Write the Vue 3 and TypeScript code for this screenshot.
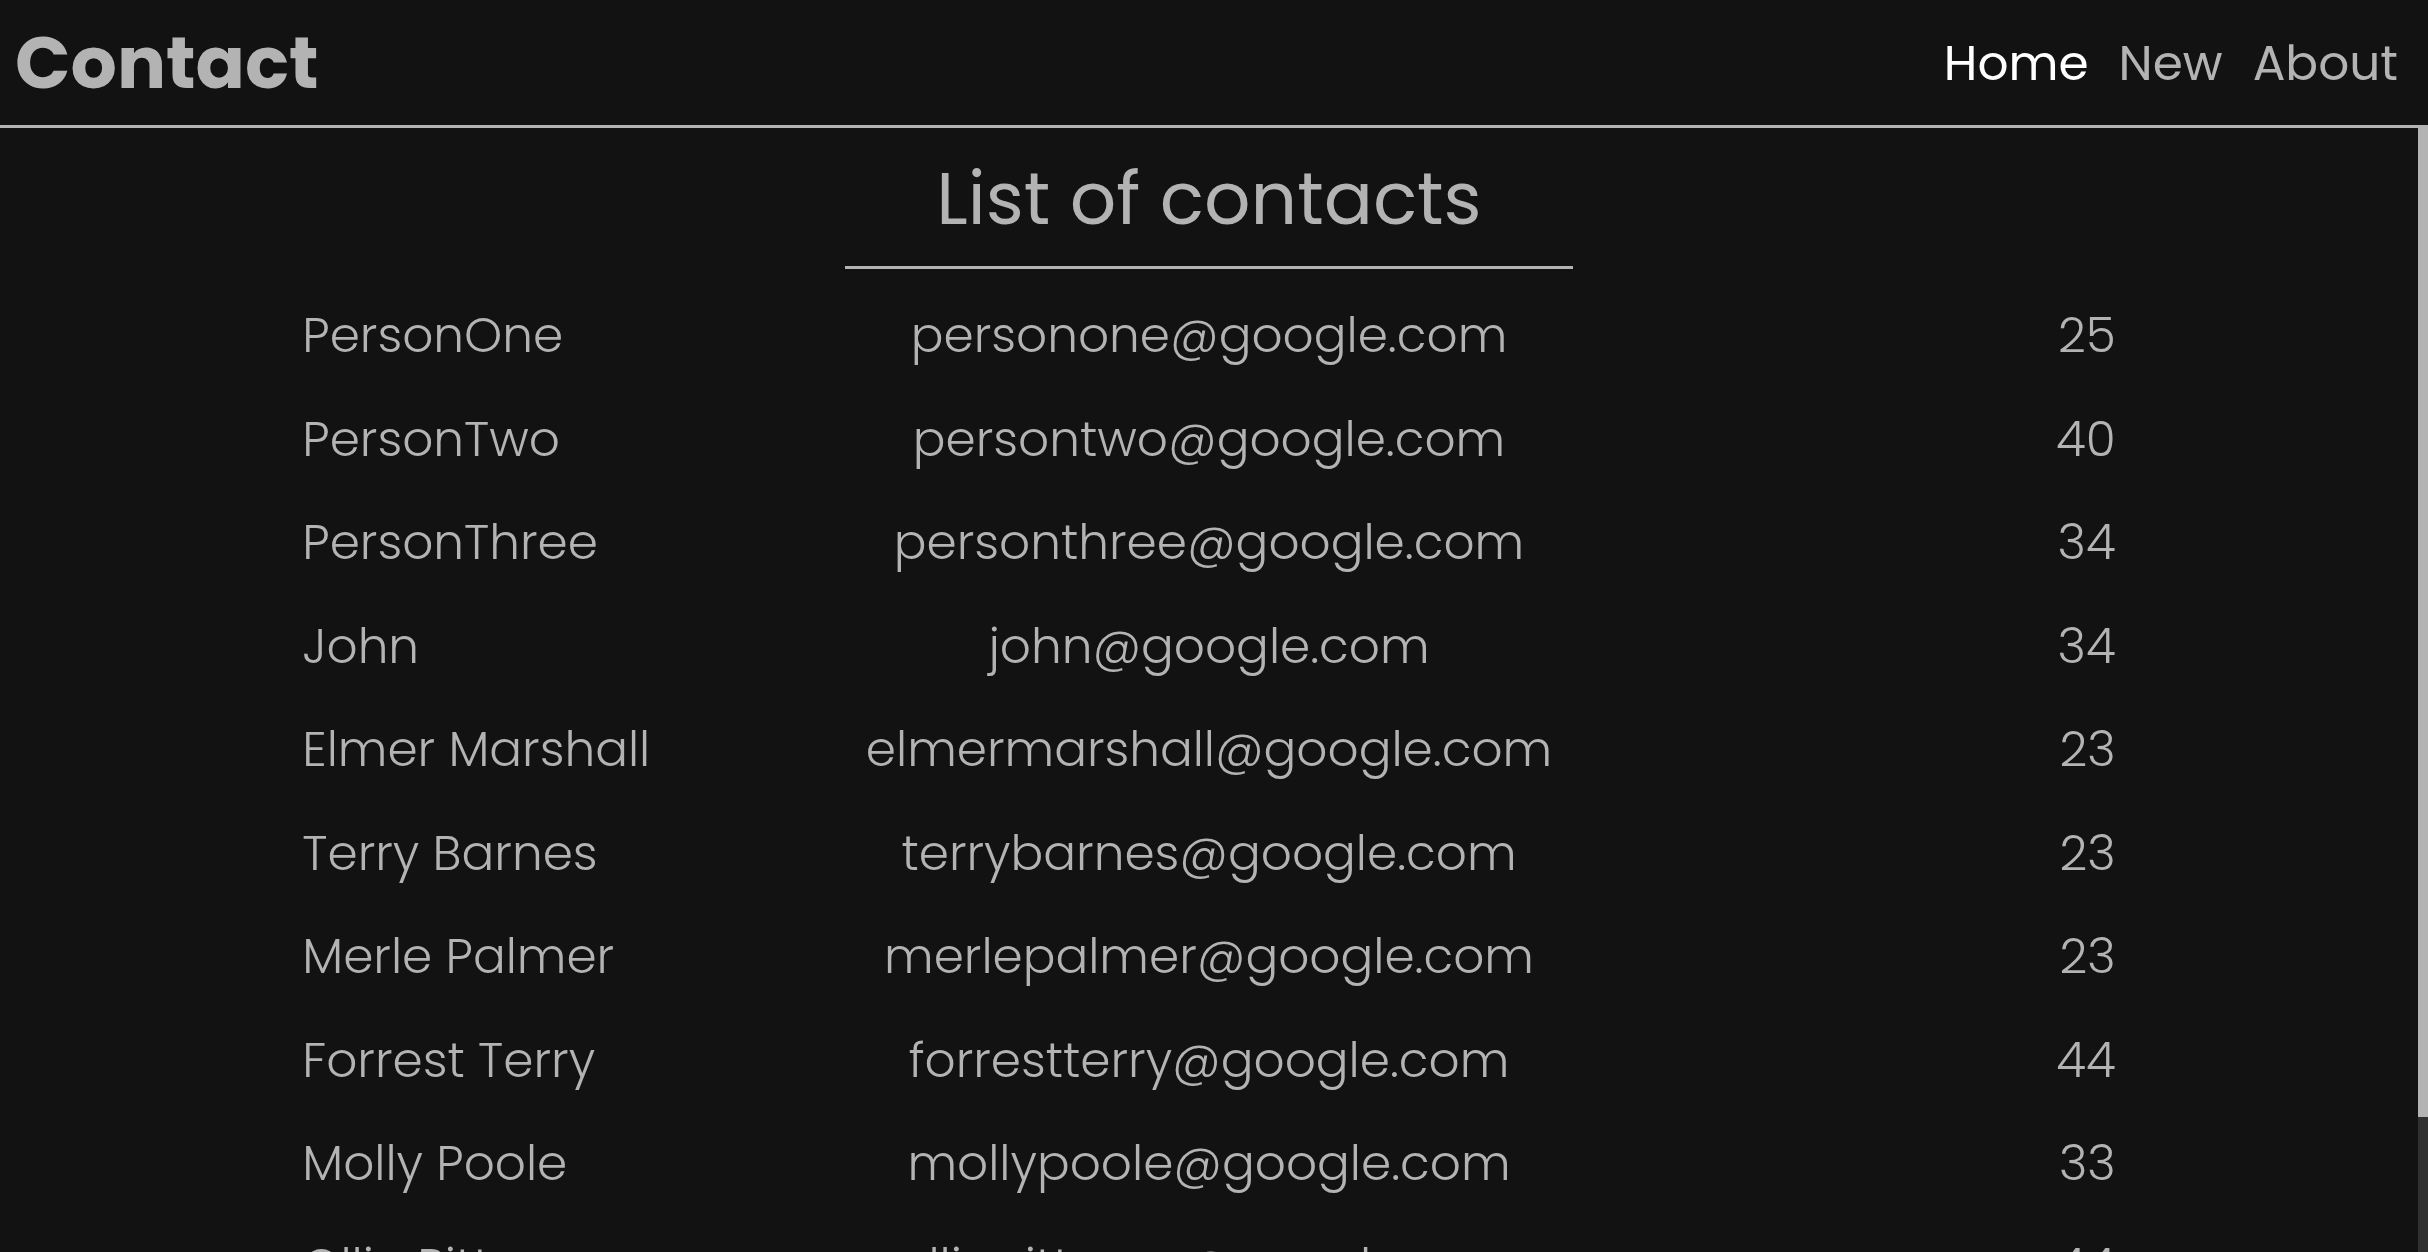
<script setup lang="ts">
interface Contact {
  name: string
  email: string
  age: number
}

interface NavLink {
  label: string
  href: string
  active: boolean
}

const links: NavLink[] = [
  { label: 'Home', href: '#home', active: true },
  { label: 'New', href: '#new', active: false },
  { label: 'About', href: '#about', active: false },
]

const contacts: Contact[] = [
  { name: 'PersonOne', email: 'personone@google.com', age: 25 },
  { name: 'PersonTwo', email: 'persontwo@google.com', age: 40 },
  { name: 'PersonThree', email: 'personthree@google.com', age: 34 },
  { name: 'John', email: 'john@google.com', age: 34 },
  { name: 'Elmer Marshall', email: 'elmermarshall@google.com', age: 23 },
  { name: 'Terry Barnes', email: 'terrybarnes@google.com', age: 23 },
  { name: 'Merle Palmer', email: 'merlepalmer@google.com', age: 23 },
  { name: 'Forrest Terry', email: 'forrestterry@google.com', age: 44 },
  { name: 'Molly Poole', email: 'mollypoole@google.com', age: 33 },
  { name: 'Ollie Pittman', email: 'olliepittman@google.com', age: 44 },
]
</script>

<template>
  <div class="app">
    <header class="header">
      <h1 class="brand">Contact</h1>
      <nav class="nav">
        <a
          v-for="link in links"
          :key="link.label"
          :href="link.href"
          class="nav-link"
          :class="{ active: link.active }"
        >{{ link.label }}</a>
      </nav>
    </header>
    <div class="body">
      <main class="content">
        <h2 class="title">List of contacts</h2>
        <table class="contacts">
          <tbody>
            <tr v-for="contact in contacts" :key="contact.email">
              <td class="name">{{ contact.name }}</td>
              <td class="email">{{ contact.email }}</td>
              <td class="age">{{ contact.age }}</td>
            </tr>
          </tbody>
        </table>
      </main>
      <div class="track" aria-hidden="true">
        <div class="thumb"></div>
      </div>
    </div>
  </div>
</template>

<style>
body {
  background: #121212;
}
</style>

<style scoped>
.app {
  display: flex;
  flex-direction: column;
  height: 100vh;
  background: #121212;
  color: #b3b3b3;
  font-family: Poppins, Inter, sans-serif;
}

.header {
  display: flex;
  flex: none;
  align-items: center;
  justify-content: space-between;
  height: 10vh;
  padding: 0 30px 0 15px;
  border-bottom: 3px solid #b3b3b3;
}

.brand {
  margin: 0;
  font-size: 3vw;
  font-weight: 700;
  line-height: 1.5;
}

.nav {
  display: flex;
  gap: 30px;
  padding-top: 2px;
}

.nav-link {
  color: #b3b3b3;
  font-size: 2vw;
  font-weight: 400;
  line-height: 1.5;
  text-decoration: none;
}

.nav-link.active {
  color: #fff;
}

.body {
  display: flex;
  flex: 1;
  min-height: 0;
}

.content {
  flex: 1;
  overflow-y: auto;
  scrollbar-width: none;
}

.track {
  flex: none;
  width: 10px;
  background: #303030;
}

.thumb {
  height: 88%;
  background: #b3b3b3;
}

.title {
  width: 30vw;
  margin: 0 auto 15px;
  padding: 16px 0 13px;
  border-bottom: 3px solid #b3b3b3;
  font-size: 3vw;
  font-weight: 400;
  line-height: 1.5;
  text-align: center;
  white-space: nowrap;
}

.contacts {
  width: 75%;
  margin: 0 auto;
  border-collapse: collapse;
  table-layout: fixed;
  font-size: 2vw;
  font-weight: 300;
  line-height: 2.13;
}

.contacts td {
  padding: 0;
  white-space: nowrap;
}

.name {
  width: 25%;
}

.email {
  text-align: center;
}

.age {
  width: 25%;
  text-align: right;
}
</style>
